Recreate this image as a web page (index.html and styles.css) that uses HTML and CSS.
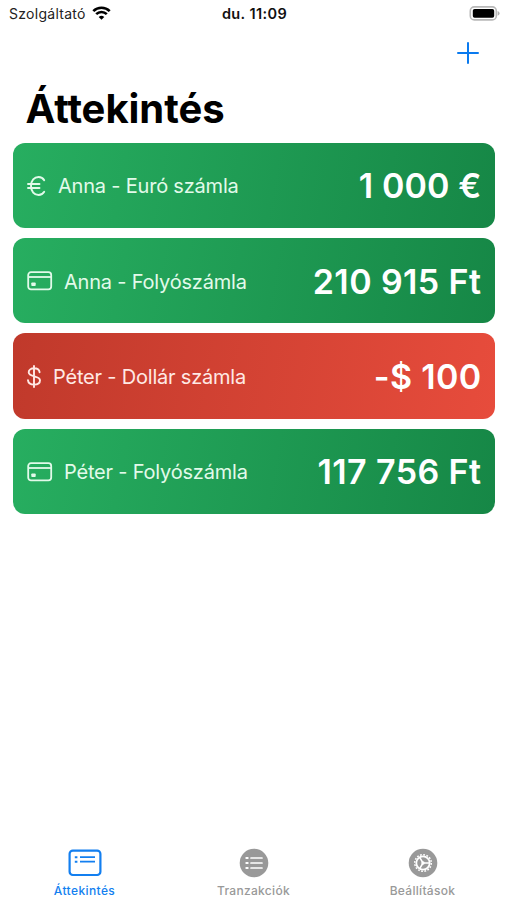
FILE: index.html
```html
<!DOCTYPE html>
<html lang="hu">
<head>
<meta charset="utf-8">
<meta name="viewport" content="width=device-width, initial-scale=1">
<title>Áttekintés</title>
<link rel="stylesheet" href="styles.css">
</head>
<body>
<div class="screen">
  <header class="status">
    <div class="carrier"><span class="carrier-name">Szolgáltató</span>
      <svg class="wifi" width="19" height="14" viewBox="0 0 19 14" fill="none" stroke="#000" stroke-width="2.6"><path d="M1.3 5.1a11.7 11.7 0 0 1 16.4 0"/><path d="M4.2 8.2a7.5 7.5 0 0 1 10.6 0"/><path d="M9.5 13.8 6.7 11a4 4 0 0 1 5.6 0z" fill="#000" stroke="none"/></svg>
    </div>
    <div class="time">du. 11:09</div>
    <svg class="battery" width="31" height="15" viewBox="0 0 31 15"><rect x="1.300" y=".9" width="26" height="13" rx="4" fill="#fff" stroke="#b8b8b8" stroke-width="1.600"/><rect x="3.800" y="3" width="21.400" height="8.800" rx="1.800"/><path d="M28.6 5q2 .9 2 2.4t-2 2.4z" fill="#b0b0b0"/></svg>
  </header>
  <nav class="toolbar">
    <svg width="22" height="22" viewBox="0 0 22 22" stroke="#0a7aef" stroke-width="2" stroke-linecap="round"><path d="M11 1v20M1 11h20"/></svg>
  </nav>
  <h1>Áttekintés</h1>
  <main class="accounts">
    <section class="card">
      <svg class="icon euro" width="19" height="20" viewBox="0 0 19 20" fill="none" stroke="currentColor" stroke-width="1.900" stroke-linecap="round"><path d="M17.2 4.2C16 2.1 14 1 11.6 1 7.300 1 4 4.600 4 10s3.300 9 7.600 9c2.400 0 4.400-1.100 5.600-3.200M1 8h11.500M1 12h11.500"/></svg>
      <span class="name">Anna - Euró számla</span><span class="amount euros">1 000 €</span>
    </section>
    <section class="card">
      <svg class="icon wallet" width="26" height="20" viewBox="0 0 26 20" fill="none" stroke="currentColor" stroke-width="1.800"><rect x="1.200" y="1.200" width="23" height="17.200" rx="2.800"/><path d="M1 6h23.400"/><rect x="4.300" y="11.500" width="4.400" height="3.600" rx=".8" fill="currentColor" stroke="none"/></svg>
      <span class="name">Anna - Folyószámla</span><span class="amount">210 915 Ft</span>
    </section>
    <section class="card debt">
      <svg class="icon dollar" width="14" height="23" viewBox="0 0 14 23" fill="none" stroke="currentColor" stroke-width="1.900" stroke-linecap="round"><path d="M12.600 7.200C12.300 4.800 10.100 3.300 7.100 3.300 4 3.300 1.700 4.900 1.700 7.300c0 5.300 11.300 2.700 11.300 8 0 2.600-2.400 4.300-5.900 4.300-3.400 0-5.800-1.700-6.100-4.300M7 1v21"/></svg>
      <span class="name">Péter - Dollár számla</span><span class="amount dollars">-$ 100</span>
    </section>
    <section class="card">
      <svg class="icon wallet" width="26" height="20" viewBox="0 0 26 20" fill="none" stroke="currentColor" stroke-width="1.800"><rect x="1.200" y="1.200" width="23" height="17.200" rx="2.800"/><path d="M1 6h23.400"/><rect x="4.300" y="11.500" width="4.400" height="3.600" rx=".8" fill="currentColor" stroke="none"/></svg>
      <span class="name">Péter - Folyószámla</span><span class="amount">117 756 Ft</span>
    </section>
  </main>
  <footer class="tabs">
    <div class="tab active">
      <svg width="34" height="28" viewBox="0 0 34 28" fill="none" stroke="currentColor" stroke-width="2.200"><rect x="1.600" y="1.600" width="30.800" height="24.400" rx="3.200"/><path d="M12 8.200h15M12 12.700h15" stroke-width="1.700"/><path d="M6.800 8.200h2.600M6.800 12.700h2.600" stroke-width="2"/></svg>
      <span>Áttekintés</span>
    </div>
    <div class="tab">
      <svg width="30" height="30" viewBox="0 0 30 30"><circle cx="15" cy="15" r="14.300" fill="currentColor"/><path d="M12 10h11M12 15h11M12 20h11" stroke="#fff" stroke-width="1.700" stroke-linecap="round"/><path d="M7.300 10h1.400M7.300 15h1.400M7.300 20h1.400" stroke="#fff" stroke-width="2" stroke-linecap="round"/></svg>
      <span>Tranzakciók</span>
    </div>
    <div class="tab">
      <svg width="30" height="30" viewBox="0 0 30 30" fill="none" stroke="#fff"><circle cx="15" cy="15" r="14.300" fill="#999" stroke="none"/><circle cx="15" cy="15" r="6.700" stroke-width="1.800"/><circle cx="15" cy="15" r="8.300" stroke-width="1.500" stroke-dasharray="1.800 1.459"/><path d="M15 15h6.500M15 15l-3.300-5.700M15 15l-3.300 5.700" stroke-width="1.500"/><circle cx="15" cy="15" r="1.700" fill="#fff" stroke="none"/></svg>
      <span>Beállítások</span>
    </div>
  </footer>
</div>
</body>
</html>
```
FILE: styles.css
```css
* { box-sizing: border-box; }
body { margin: 0; background: #fff; color: #000; font-family: Inter, "Liberation Sans", sans-serif; }
.screen { height: 900px; display: flex; flex-direction: column; overflow: hidden; }
svg { display: block; flex: none; }
.status { height: 27px; padding: 0 7px 0 9px; display: grid; grid-template-columns: 1fr auto 1fr; align-items: center; font-size: 14px; white-space: nowrap; }
.carrier { display: flex; align-items: center; gap: 6px; color: #222; }
.carrier-name { letter-spacing: 0.280px; }
.wifi { position: relative; top: -1px; }
.time { font-size: 14.500px; font-weight: 600; color: #111; letter-spacing: 0.400px; }
.battery { justify-self: end; }
.toolbar { height: 51px; padding-right: 28px; display: flex; align-items: center; justify-content: flex-end; }
h1 { margin: 0; height: 64.500px; padding-left: 25.500px; font-size: 40px; line-height: 62px; font-weight: 700; letter-spacing: -0.050px; }
.accounts { display: flex; flex-direction: column; gap: 10px; padding: 0 12.500px 0 13px; }
.card { height: 85.400px; border-radius: 12px; padding: 0 13.500px 0 14px; display: flex; align-items: center; color: #e2faea; background: linear-gradient(100deg, #27ae60, #168746); white-space: nowrap; }
.debt { color: #ffe9e5; background: linear-gradient(100deg, #c0392b, #e74c3c); }
.icon { position: relative; top: 0.500px; }
.name { font-size: 20px; letter-spacing: -0.200px; padding-top: 2px; }
.euro { margin-right: 12px; }
.wallet { margin-right: 11px; }
.dollar { margin-right: 12px; }
.amount { margin-left: auto; color: #fff; font-size: 34px; font-weight: 600; letter-spacing: 0.400px; margin-right: -0.400px; padding-top: 1px; }
.euros { letter-spacing: 0.100px; }
.dollars { letter-spacing: 0.300px; }
.tabs { margin-top: auto; height: 56px; display: grid; grid-template-columns: repeat(3, 1fr); }
.tab { display: flex; flex-direction: column; align-items: center; color: #999; font-size: 12px; font-weight: 500; }
.tab svg { height: 30px; margin-top: 4px; }
.tab span { line-height: 16px; margin-top: 5px; letter-spacing: 0.300px; }
.active { color: #137ff0; }
.active span { letter-spacing: 0.400px; }
```
